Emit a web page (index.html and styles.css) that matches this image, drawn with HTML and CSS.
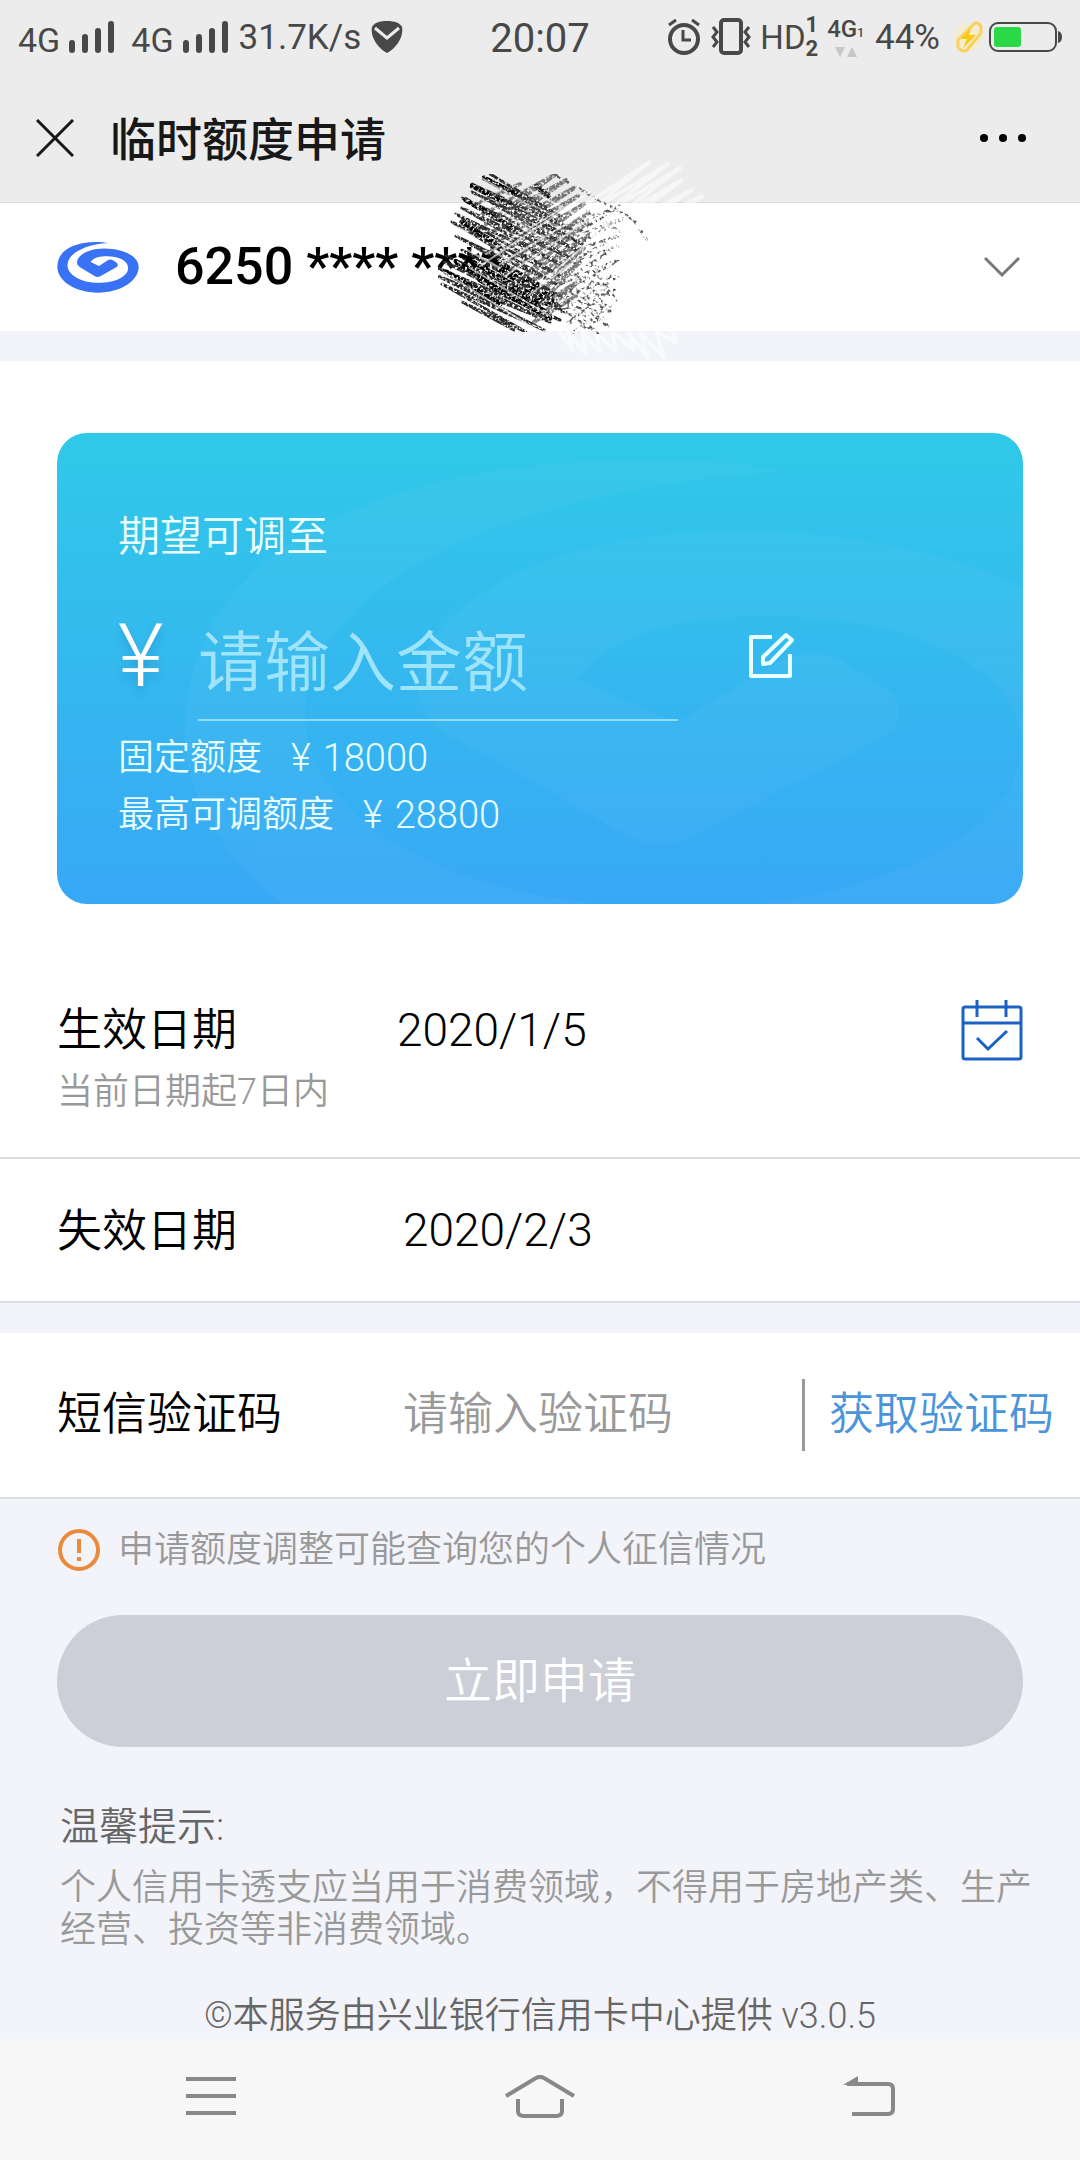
FILE: index.html
```html
<!DOCTYPE html>
<html lang="zh-CN">
<head>
<meta charset="utf-8">
<meta name="viewport" content="width=device-width, initial-scale=1">
<title>临时额度申请</title>
<link rel="stylesheet" href="styles.css">
</head>
<body>
<header class="top">
  <div class="status">
    <div class="status-left">
      <span class="net">4G</span>
      <svg class="bars" width="46" height="34" viewBox="0 0 46 34"><path d="M3 23v7M16 17v13M29 11v19M42 4v26" /></svg>
      <span class="net">4G</span>
      <svg class="bars" width="46" height="34" viewBox="0 0 46 34"><path d="M3 23v7M16 17v13M29 11v19M42 4v26" /></svg>
      <span class="speed">31.7K/s</span>
      <svg class="shield" width="32" height="34" viewBox="0 0 32 34"><path fill="#484848" d="M16 1C24 1 29 3 31 7C33 17 25 28 16 33C7 28-1 17 1 7C3 3 8 1 16 1Z"/><path fill="none" stroke="#ececec" stroke-width="3" d="M4 8l12 10L28 8"/></svg>
    </div>
    <time class="clock">20:07</time>
    <div class="status-right">
      <svg width="34" height="38" viewBox="0 0 34 38" fill="none" stroke="#484848" stroke-width="4"><circle cx="17" cy="21" r="14"/><path d="M16 12v10h8M2 7l7-5M32 7l-7-5" stroke-width="3"/></svg>
      <svg class="vibrate" width="40" height="38" viewBox="0 0 40 38" fill="none" stroke="#484848" stroke-width="3"><rect x="10" y="2" width="20" height="33" rx="3" stroke-width="4"/><path d="M2 9l4 5-4 5 4 5-4 5M38 9l-4 5 4 5-4 5 4 5"/></svg>
      <span class="hd">HD</span>
      <span class="sims"><b>1</b><b>2</b></span>
      <span class="mini"><span>4G<small>1</small></span><svg width="22" height="10" viewBox="0 0 22 10" fill="#c6c6c6"><path d="M0 0h10L5 10zM12 10h10L17 0z"/></svg></span>
      <span class="speed percent">44%</span>
      <svg class="bolt" width="32" height="34" viewBox="0 0 32 34"><circle cx="16" cy="17" r="14" fill="#f3ecd0"/><path fill="none" stroke="#f8d25a" stroke-width="3" stroke-linejoin="round" d="M23 3Q27 2 29 7V13L15 30Q10 33 6 27V20Z"/><path fill="#fac80f" d="M19 8L9 19h6L11 28L24 15h-7z"/></svg>
      <svg width="74" height="34" viewBox="0 0 74 34"><rect x="2" y="3" width="66" height="28" rx="8" fill="none" stroke="#484848" stroke-width="2"/><path fill="#484848" d="M70 11q4 1 4 6t-4 6z"/><rect x="6" y="7" width="27" height="20" rx="3" fill="#2bd848"/></svg>
    </div>
  </div>
  <div class="titlebar">
    <button class="icon-button" type="button" aria-label="关闭"><svg width="38" height="38" viewBox="0 0 38 38"><path d="M1 1l36 36M37 1L1 37" stroke="#181818" stroke-width="3"/></svg></button>
    <h1 class="title">临时额度申请</h1>
    <button class="icon-button" type="button" aria-label="更多"><svg width="48" height="10" viewBox="0 0 48 10"><circle cx="5" cy="5" r="4"/><circle cx="24" cy="5" r="4"/><circle cx="43" cy="5" r="4"/></svg></button>
  </div>
</header>

<main class="main">
  <section class="account">
    <svg class="logo" width="82" height="52" viewBox="171 152 242 154" preserveAspectRatio="none"><path id="swirl" fill="currentColor" d="M322 158C290 150 172 150 172 229C172 270 225 305 292 305C358 305 412 270 412 229C412 195 362 174 310 174C262 174 230 195 230 216C230 224 238 230 246 234L282 256Q291 261 300 256L346 230Q354 224 348 217L336 209Q329 205 321 209L295 226L270 214C280 200 300 197 318 197C352 197 381 210 381 232C381 258 340 276 295 276C240 276 202 252 202 224C202 190 250 163 322 158Z"/></svg>
    <select class="card-select" aria-label="信用卡"><option>6250 **** ****</option></select>
    <svg class="chevron" width="36" height="22" viewBox="0 0 36 22"><path d="M1 2l17 17L35 2" fill="none" stroke="#777" stroke-width="3"/></svg>
    <svg class="scribble" width="290" height="210" viewBox="420 155 290 210" aria-hidden="true">
      <defs>
        <filter id="grain" x="0" y="0" width="1" height="1"><feTurbulence type="fractalNoise" baseFrequency=".4" numOctaves="2" seed="7"/><feColorMatrix values="0 0 0 0 0 0 0 0 0 0 0 0 0 0 0 0 0 0 4 -1.1"/><feComposite in="SourceGraphic" operator="in"/></filter>
        <filter id="sparse" x="0" y="0" width="1" height="1"><feTurbulence type="fractalNoise" baseFrequency=".3" numOctaves="2" seed="3"/><feColorMatrix values="0 0 0 0 0 0 0 0 0 0 0 0 0 0 0 0 0 0 5 -2.4"/><feComposite in="SourceGraphic" operator="in"/></filter>
      </defs>
      <path class="chalk-white" d="M570 215L650 162L585 214L668 164L600 216L680 168L610 222L682 180L620 226L692 190L630 230L702 196L640 236"/>
      <path class="chalk-white" d="M560 332L572 350L568 332L586 354L582 332L600 352L596 332L616 352L612 332L634 350L628 332L648 358L640 332L664 358L656 332L676 342L670 320"/>
      <g filter="url(#grain)">
        <path class="chalk-dark" d="M490 174L560 216L486 180L572 230L472 184L582 244L472 192L576 250L462 198L570 258L462 208L560 264L456 214L560 276L452 222L556 284L456 236L560 296L462 250L560 306L446 256L566 312L444 262L560 320L438 268L550 322L438 276L544 330L442 284L526 332L462 302L514 330"/>
        <path class="chalk-heavy" d="M472 186L516 208M466 200L516 230M484 178L520 196M462 256L548 304M456 262L546 312M490 258L552 294M500 270L552 300M480 280L550 318M508 284L540 304M462 222L500 246M536 186L548 196M446 272L500 304"/>
        <path class="chalk-cross" d="M476 204L520 184M480 216L556 174L486 224L566 180L492 232L574 188L496 242L578 196L498 254L584 204L500 266L590 212L500 278L588 222L510 286L590 234L520 290L584 248L530 300L580 262L536 308L580 280L534 322L576 296"/>
      </g>
      <g filter="url(#sparse)">
        <path class="chalk-mid" d="M553 174L634 220L648 242M580 206L620 232M560 230L620 206L562 242L624 218L558 256L618 236L556 270L618 246L560 284L618 260L556 300L618 276L562 312L616 288L566 324L610 306L574 332L604 318M550 300L598 334L560 296L608 326L572 286L612 314L584 276L616 300L588 262L616 280"/>
      </g>
      <path class="chalk-scratch" d="M480 266L590 192M486 254L570 204M500 264L596 206M505 276L606 208M540 284L612 222M528 296L570 264M476 196L540 236M478 176L530 206M460 228L510 262M456 244L500 268M470 268L550 316M444 272L530 326M530 190L590 222"/>
    </svg>
  </section>

  <section class="limit">
    <div class="limit-card">
      <svg class="watermark" viewBox="0 0 966 471" preserveAspectRatio="xMaxYMid slice" aria-hidden="true"><use href="#swirl" transform="translate(-560 -546) scale(4 3.7)"/></svg>
      <label class="limit-label" for="amount">期望可调至</label>
      <div class="amount-row">
        <span class="yen">¥</span>
        <input class="amount" id="amount" type="text" inputmode="numeric" placeholder="请输入金额">
        <button class="icon-button edit" type="button" aria-label="编辑"><svg width="48" height="48" viewBox="0 0 48 48" fill="none" stroke="#eaffff" stroke-width="4" stroke-linejoin="round"><path d="M24 5H3V44H42V22"/><path d="M38 3L44 8L22 31L15 32V25Z"/></svg></button>
      </div>
      <p class="limit-line"><span>固定额度</span><span class="money"><span>¥</span><span>18000</span></span></p>
      <p class="limit-line"><span>最高可调额度</span><span class="money"><span>¥</span><span>28800</span></span></p>
    </div>
  </section>

  <section class="row row-start">
    <div class="row-label">生效日期</div>
    <time class="date">2020/1/5</time>
    <button class="icon-button" type="button" aria-label="选择日期"><svg width="62" height="62" viewBox="0 0 62 62" fill="none" stroke="#1b62c4" stroke-width="3"><rect x="2" y="8" width="58" height="52" rx="2"/><path d="M2 24H60M16 1V18M45 1V18M16 39L27 50L46 32"/></svg></button>
    <p class="hint">当前日期起7日内</p>
  </section>
  <section class="row row-end">
    <div class="row-label">失效日期</div>
    <time class="date">2020/2/3</time>
  </section>

  <form class="row row-sms">
    <label class="row-label" for="code">短信验证码</label>
    <input class="code" id="code" type="text" inputmode="numeric" placeholder="请输入验证码">
    <button class="get-code" type="button">获取验证码</button>
  </form>

  <section class="bottom">
    <p class="notice"><svg width="44" height="44" viewBox="0 0 44 44" fill="none" stroke="#ec8a3c"><circle cx="22" cy="22" r="19" stroke-width="4"/><path d="M22 11V25M22 29V33" stroke-width="4"/></svg><span>申请额度调整可能查询您的个人征信情况</span></p>
    <button class="apply" type="button">立即申请</button>
    <h2 class="tips-title">温馨提示:</h2>
    <p class="tips">个人信用卡透支应当用于消费领域，不得用于房地产类、生产经营、投资等非消费领域。</p>
    <p class="copyright">©本服务由兴业银行信用卡中心提供 v3.0.5</p>
  </section>
</main>

<nav class="nav" aria-label="系统导航">
  <button class="icon-button" type="button" aria-label="菜单"><svg width="52" height="44" viewBox="0 0 52 44"><path d="M1 4H51M1 21H51M1 38H51" stroke="#888" stroke-width="4"/></svg></button>
  <button class="icon-button" type="button" aria-label="主页"><svg width="72" height="44" viewBox="0 0 72 44" fill="none" stroke="#888" stroke-width="4"><path d="M2 21L32 3Q36 1 40 3L70 21M14 24V36Q14 41 20 41H52Q58 41 58 36V24"/></svg></button>
  <button class="icon-button" type="button" aria-label="返回"><svg width="52" height="44" viewBox="0 0 52 44" fill="none" stroke="#888" stroke-width="4"><path d="M4 9H45Q50 9 50 14V34Q50 39 45 39H9"/><path d="M0 10L15 1V10Z" fill="#888" stroke="none"/></svg></button>
</nav>
</body>
</html>
```
FILE: styles.css
```css
* { box-sizing: border-box; }
body {
  margin: 0;
  min-height: 100vh;
  display: flex;
  flex-direction: column;
  background: #f3f4f9;
  color: #000;
  font-family: Roboto, "Noto Sans CJK SC", sans-serif;
  font-weight: 350;
}
p, h1, h2 { margin: 0; font-weight: inherit; }
svg { display: block; flex: none; }
button, input, select {
  margin: 0;
  padding: 0;
  border: 0;
  background: none;
  color: inherit;
  font: inherit;
  border-radius: 0;
}

/* status and title bars */
.top { background: #ececec; border-bottom: 1px solid #dcdcdc; }
.status {
  display: grid;
  grid-template-columns: 1fr auto 1fr;
  align-items: center;
  height: 74px;
  padding: 0 18px;
  color: #484848;
  font-weight: 400;
  white-space: nowrap;
}
.status-left, .status-right { display: flex; align-items: center; }
.status-right { justify-content: flex-end; }
.net { font-size: 34px; padding-top: 6px; }
.bars { margin: 0 16px 0 9px; fill: none; stroke: #484848; stroke-width: 6; stroke-linecap: round; }
.bars + .speed { margin-left: -6px; }
.speed { font-size: 35px; }
.shield { margin-left: 10px; }
.clock { font-size: 40px; padding-top: 2px; }
.vibrate { margin: 0 9px 0 10px; }
.hd { font-size: 33px; }
.sims { display: flex; flex-direction: column; font-size: 22px; line-height: 24px; }
.mini { display: flex; flex-direction: column; align-items: center; gap: 2px; margin: 0 11px 0 9px; font-size: 24px; font-weight: 500; line-height: 24px; }
.mini small { font-size: 12px; }
.percent { margin-right: 12px; }
.bolt { margin-right: 4px; }
.titlebar { display: flex; align-items: center; height: 128px; padding: 0 53px 0 36px; }
.title { flex: 1; margin-left: 36px; padding-top: 3px; font-size: 46px; font-weight: 500; line-height: 60px; color: #181818; }
.icon-button { display: block; cursor: pointer; }

/* selected card */
.account {
  position: relative;
  display: flex;
  align-items: center;
  height: 128px;
  padding: 0 60px 0 57px;
  background: #fff;
}
.logo { color: #3a72f5; }
.card-select { flex: 1; min-width: 0; margin-left: 36px; appearance: none; font-size: 52px; font-weight: 500; line-height: 64px; }
.chevron { pointer-events: none; }
.scribble { position: absolute; left: 420px; top: -48px; pointer-events: none; }
.scribble path { fill: none; stroke-linejoin: round; stroke-linecap: round; }
.chalk-white { stroke: #fff; stroke-width: 4; opacity: .5; }
.chalk-dark { stroke: #2a2a2a; stroke-width: 3; }
.chalk-heavy { stroke: #000; stroke-width: 5; }
.chalk-cross { stroke: #444; stroke-width: 4; opacity: .7; }
.chalk-mid { stroke: #555; stroke-width: 3; }
.chalk-scratch { stroke: #fff; stroke-width: 2; opacity: .6; }

/* limit card */
.limit { margin-top: 30px; padding: 72px 57px 54px; background: #fff; }
.limit-card {
  position: relative;
  height: 471px;
  padding: 76px 61px 0;
  overflow: hidden;
  border-radius: 30px;
  background: linear-gradient(#30c9e8, #38a8f6);
  color: #eaffff;
}
.limit-card > :not(.watermark) { position: relative; }
.watermark { position: absolute; inset: 0; width: 100%; height: 100%; color: #fff; opacity: .03; }
.limit-label { display: block; font-size: 42px; line-height: 56px; }
.amount-row { display: flex; align-items: center; height: 130px; margin-top: 26px; }
.yen { width: 80px; color: #fff; font-size: 88px; line-height: 100px; text-shadow: 0 6px 8px rgba(0, 60, 120, .2); }
.amount { flex: 0 1 480px; min-width: 0; height: 130px; padding-top: 16px; border-bottom: 2px solid #8fdcf8; font-size: 66px; }
.amount::placeholder { color: #a0e4fb; opacity: 1; }
.edit { margin-left: 70px; }
.limit-line { display: flex; gap: 29px; font-size: 36px; line-height: 57px; }
.amount-row + .limit-line { margin-top: 9px; }
.money { display: flex; gap: 12px; font-size: 38px; }

/* form rows */
.row { display: grid; align-items: center; padding: 0 57px; background: #fff; font-size: 45px; line-height: 60px; border-bottom: 2px solid #dcdde0; }
.row-start { grid-template-columns: 340px 1fr auto; padding-top: 40px; padding-bottom: 36px; }
.row-end { grid-template-columns: 346px 1fr; height: 144px; }
.row-sms { grid-template-columns: 346px 1fr auto; height: 166px; margin-top: 30px; padding-right: 26px; }
.row-start .row-label, .row-end .row-label { padding-top: 3px; }
.date { font-size: 46px; }
.hint { grid-column: 1 / -1; padding-top: 2px; color: #999; font-size: 36px; line-height: 58px; }
.code { min-width: 0; width: 100%; }
.code::placeholder { color: #999; opacity: 1; }
.get-code { height: 72px; padding-left: 24px; border-left: 3px solid #999; color: #4a94dc; line-height: 60px; cursor: pointer; }

/* notice, action and footer */
.bottom { display: flex; flex-direction: column; padding: 24px 57px 0; }
.notice { display: flex; align-items: center; gap: 17px; color: #999; font-size: 36px; line-height: 54px; }
.apply { height: 132px; margin-top: 38px; padding-bottom: 8px; border-radius: 66px; background: #cccfd8; color: #fff; font-size: 48px; cursor: pointer; }
.tips-title { margin-top: 54px; padding-left: 3px; color: #666; font-size: 39px; line-height: 52px; }
.tips { margin: 14px -10px 0 0; padding-left: 3px; color: #999; font-size: 36px; line-height: 42px; }
.copyright { margin-top: 42px; color: #666; font-size: 36px; line-height: 46px; text-align: center; }

/* system navigation */
.nav { display: grid; grid-template-columns: repeat(3, 1fr); flex: 1; min-height: 120px; padding: 0 46px 6px; place-items: center; background: #f7f7f7; }
```
